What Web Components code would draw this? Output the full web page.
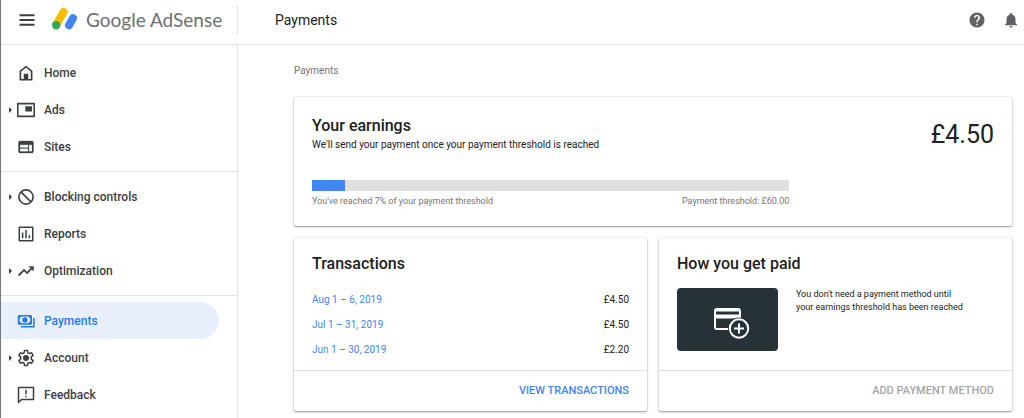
<!DOCTYPE html>
<html lang="en">
<head>
<meta charset="utf-8">
<meta name="viewport" content="width=device-width, initial-scale=1">
<title>Payments - Google AdSense</title>
<style>
  body { margin: 0; background: #fff; color: #212121; font-family: Roboto, "Liberation Sans", sans-serif; font-size: 10px; line-height: 14px; }
</style>
</head>
<body>
<adsense-app></adsense-app>

<script>
const define = (name, html, setup) => {
  const template = document.createElement('template');
  template.innerHTML = html;
  customElements.define(name, class extends HTMLElement {
    constructor() {
      super();
      this.attachShadow({ mode: 'open' }).append(template.content.cloneNode(true));
    }
    connectedCallback() {
      if (setup && !this.ready) { this.ready = true; setup(this, this.shadowRoot); }
    }
  });
};

const ICONS = {
  menu: '<path d="M3 5h18v2.400H3zM3 10.800h18v2.400H3zM3 16.600h18V19H3z"/>',
  home: '<path fill="none" stroke="currentColor" stroke-width="2.2" d="M4.5 9.5 12 3.6l7.500 5.900V21h-15z"/><path d="M9 13h6v8H9z"/>',
  ads: '<path fill="none" stroke="currentColor" stroke-width="2.200" stroke-linejoin="round" d="M1 3.500h22v17H1z"/><path d="M11 7h9v7h-9z"/>',
  sites: '<path d="M20 4H4c-1.100 0-2 .9-2 2v12c0 1.100.9 2 2 2h16c1.100 0 2-.9 2-2V6c0-1.100-.9-2-2-2zm-5 14H4v-4h11v4zm0-5H4V9h11v4zm5 5h-4V9h4v9z" stroke="currentColor" stroke-width=".4"/>',
  block: '<circle cx="12" cy="12" r="9.500" fill="none" stroke="currentColor" stroke-width="2.200"/><path d="m5.500 5.500 13 13" stroke="currentColor" stroke-width="2.200"/>',
  reports: '<path fill="none" stroke="currentColor" stroke-width="2" stroke-linejoin="round" d="M3 3h18v18H3z"/><path d="M6.500 10h2v7.500h-2zM11 6.500h2v11h-2zM15.500 13.500h2v4h-2z"/>',
  trend: '<path d="m16 6 2.300 2.300-4.900 4.900-4-4L1.500 17 3 18.500l6.400-6.400 4 4 6.400-6.300L22 12V6z" stroke="currentColor" stroke-width=".6"/>',
  payments: '<path fill-rule="evenodd" d="M3 4h15a2 2 0 0 1 2 2v9a2 2 0 0 1-2 2H3a2 2 0 0 1-2-2V6a2 2 0 0 1 2-2zm.5 4v5c1 0 2 1 2 2h10c0-1 1-2 2-2V8c-1 0-2-1-2-2h-10c0 1-1 2-2 2zm7-1a3.500 3.500 0 1 1 0 7 3.500 3.500 0 0 1 0-7z"/><path fill="none" stroke="currentColor" stroke-width="2" d="M22.500 8v11.500H5"/>',
  settings: '<path fill="none" stroke="currentColor" stroke-width="2" stroke-linejoin="round" d="m10 2-.5 3-2 1.200-3-1.200-2 3.500L5 10.500v3l-2.500 2 2 3.500 3-1.200 2 1.200.5 3h4l.5-3 2-1.200 3 1.200 2-3.500-2.500-2v-3l2.500-2-2-3.500-3 1.200-2-1.200-.5-3z"/><circle cx="12" cy="12" r="4"/>',
  feedback: '<path fill="none" stroke="currentColor" stroke-width="2" stroke-linejoin="round" d="M2 2h20v16H6l-4 4z"/><path d="M11 5h2v6h-2zM11 13h2v2h-2z"/>',
  help: '<path d="M12 2C6.480 2 2 6.480 2 12s4.480 10 10 10 10-4.480 10-10S17.520 2 12 2zm1 17h-2v-2h2v2zm2.070-7.750-.9.920C13.450 12.900 13 13.500 13 15h-2v-.5c0-1.100.45-2.100 1.170-2.830l1.240-1.260c.37-.36.59-.86.59-1.410 0-1.100-.9-2-2-2s-2 .9-2 2H8c0-2.210 1.790-4 4-4s4 1.790 4 4c0 .88-.36 1.680-.93 2.250z"/>',
  bell: '<path d="M12 22c1.100 0 2-.9 2-2h-4c0 1.100.9 2 2 2zm6-6v-5c0-3.070-1.640-5.640-4.500-6.320V4a1.500 1.500 0 0 0-3 0v.68C7.630 5.360 6 7.920 6 11v5l-2 2v1h16v-1l-2-2z"/>'
};

define('ad-icon', `
  <style>
    :host { display: block; flex: none; width: var(--icon-size, 18px); height: var(--icon-size, 18px); }
    svg { display: block; width: 100%; height: 100%; fill: currentColor; }
  </style>
  <svg viewBox="0 0 24 24" aria-hidden="true"></svg>`,
  (host, root) => { root.querySelector('svg').innerHTML = ICONS[host.getAttribute('name')]; });

define('ad-header', `
  <style>
    :host { display: flex; height: 44px; border-bottom: 1px solid #e3e3e3; }
    button { display: block; padding: 0; border: 0; background: none; color: inherit; }
    .brand { box-sizing: border-box; width: 236px; display: flex; align-items: center; padding: 0 16px 4px; color: #3c4043; }
    .brand a { display: flex; align-items: center; gap: 8px; margin-left: 15px; text-decoration: none; color: #6b6f74; font: 19px/24px Lato, sans-serif; white-space: nowrap; }
    .mark { width: 26px; height: 24px; flex: none; overflow: visible; }
    .rest { flex: 1; display: flex; align-items: center; margin: 5px 0 9px; padding: 0 4px 0 37px; border-left: 1px solid #e3e3e3; }
    h1 { flex: 1; margin: 0; font: 400 14px/20px Roboto, sans-serif; color: #202124; }
    .tools { display: flex; gap: 16px; color: #5f6165; }
  </style>
  <div class="brand">
    <button aria-label="Main menu"><ad-icon name="menu" style="--icon-size:20px"></ad-icon></button>
    <a href="#home">
      <svg class="mark" viewBox="0 0 26 24" aria-hidden="true">
        <path d="M4.500 16.500 11.600 4" stroke="#fbbc04" stroke-width="8" stroke-linecap="round"/>
        <path d="m17 17.300 4-7" stroke="#4285f4" stroke-width="8" stroke-linecap="round"/>
        <circle cx="4.200" cy="17.300" r="4.200" fill="#34a853"/>
      </svg>
      <span>Google AdSense</span>
    </a>
  </div>
  <div class="rest">
    <h1>Payments</h1>
    <div class="tools">
      <button aria-label="Help"><ad-icon name="help"></ad-icon></button>
      <button aria-label="Notifications"><ad-icon name="bell"></ad-icon></button>
    </div>
  </div>`);

define('ad-nav-item', `
  <style>
    :host { display: block; }
    a { display: flex; align-items: center; height: 37px; padding-left: 8px; margin-right: 18px; border-radius: 0 19px 19px 0; color: #3c4043; font: 500 12px/16px Roboto, sans-serif; text-decoration: none; }
    .arrow { width: 3px; margin-right: 5px; border: solid transparent; border-width: 3px 0 3px 3px; box-sizing: border-box; }
    ad-icon { margin-right: 9px; }
    :host([expandable]) .arrow { border-left-color: currentColor; }
    :host([selected]) a { background: #e8f0fe; color: #1f79f0; }
  </style>
  <a><span class="arrow"></span><ad-icon></ad-icon><slot></slot></a>`,
  (host, root) => {
    const icon = document.createElement('ad-icon');
    icon.setAttribute('name', host.getAttribute('icon'));
    root.querySelector('ad-icon').replaceWith(icon);
    const link = root.querySelector('a');
    link.href = '#' + host.getAttribute('icon');
    if (host.hasAttribute('selected')) link.setAttribute('aria-current', 'page');
  });

define('ad-sidebar', `
  <style>
    :host { display: block; box-sizing: border-box; width: 237px; flex: none; padding: 9px 0 5px; border-right: 1px solid #e3e3e3; }
    hr { height: 1px; margin: 6px 0; border: 0; background: #e3e3e3; }
  </style>
  <nav aria-label="Main">
    <ad-nav-item icon="home">Home</ad-nav-item>
    <ad-nav-item icon="ads" expandable>Ads</ad-nav-item>
    <ad-nav-item icon="sites">Sites</ad-nav-item>
    <hr>
    <ad-nav-item icon="block" expandable>Blocking controls</ad-nav-item>
    <ad-nav-item icon="reports">Reports</ad-nav-item>
    <ad-nav-item icon="trend" expandable>Optimization</ad-nav-item>
    <hr>
    <ad-nav-item icon="payments" selected>Payments</ad-nav-item>
    <ad-nav-item icon="settings" expandable>Account</ad-nav-item>
    <ad-nav-item icon="feedback">Feedback</ad-nav-item>
  </nav>`);

define('ad-card', `
  <style>
    :host { display: flex; flex-direction: column; background: #fff; border-radius: 2px; box-shadow: 0 1px 2px rgba(0,0,0,.4), 0 0 2px rgba(0,0,0,.16); }
    .body { flex: 1; padding: 16px 18px 18px; }
    footer { display: none; }
    :host([actions]) .body { padding-bottom: 8px; }
    :host([actions]) footer { display: flex; justify-content: flex-end; align-items: center; height: 40px; padding: 0 18px; border-top: 1px solid #e0e0e0; }
  </style>
  <div class="body"><slot></slot></div>
  <footer><slot name="action"></slot></footer>`);

define('ad-earnings', `
  <style>
    :host { display: block; }
    .top { display: flex; justify-content: space-between; }
    h2 { margin: 3px 0 2px; font: 500 16px/20px Roboto, sans-serif; }
    p { margin: 0; }
    .amount { margin-top: 6px; font-size: 25px; line-height: 32px; }
    .progress { width: 70%; margin-top: 28px; }
    .track { height: 11px; background: #e0e0e0; }
    .fill { width: 7%; height: 100%; background: #4285f4; }
    .labels { display: flex; justify-content: space-between; margin-top: 3px; color: #757575; font-size: 9px; }
  </style>
  <ad-card>
    <div class="top">
      <div><h2>Your earnings</h2><p>We'll send your payment once your payment threshold is reached</p></div>
      <div class="amount">£4.50</div>
    </div>
    <div class="progress">
      <div class="track" role="progressbar" aria-valuenow="7" aria-valuemin="0" aria-valuemax="100" aria-label="Payment threshold"><div class="fill"></div></div>
      <div class="labels"><span>You've reached 7% of your payment threshold</span><span>Payment threshold: £60.00</span></div>
    </div>
  </ad-card>`);

define('ad-transactions', `
  <style>
    :host { display: grid; }
    h2 { margin: 0 0 13px; font: 500 16px/20px Roboto, sans-serif; }
    table { width: 100%; border-collapse: collapse; font-size: 10px; }
    th, td { height: 25px; padding: 0; font-weight: 400; text-align: left; }
    td { text-align: right; }
    a { color: #4285f4; text-decoration: none; }
    button { padding: 0; border: 0; background: none; color: #4285f4; font: 500 11px/16px Roboto, sans-serif; }
  </style>
  <ad-card actions>
    <h2 id="t">Transactions</h2>
    <table aria-labelledby="t">
      <tr><th scope="row"><a href="#aug">Aug 1 – 6, 2019</a></th><td>£4.50</td></tr>
      <tr><th scope="row"><a href="#jul">Jul 1 – 31, 2019</a></th><td>£4.50</td></tr>
      <tr><th scope="row"><a href="#jun">Jun 1 – 30, 2019</a></th><td>£2.20</td></tr>
    </table>
    <button slot="action">VIEW TRANSACTIONS</button>
  </ad-card>`);

define('ad-payment-method', `
  <style>
    :host { display: grid; }
    h2 { margin: 0 0 14px; font: 500 16px/20px Roboto, sans-serif; }
    .method { display: flex; gap: 18px; }
    .tile { flex: none; display: grid; place-items: center; width: 101px; height: 63px; border-radius: 4px; background: #263238; }
    svg { width: 36px; height: 32px; margin-left: 8px; margin-top: 8px; }
    p { margin: 0; font-size: 9px; line-height: 13px; }
    button { padding: 0; border: 0; background: none; color: #a6a6a6; font: 500 11px/16px Roboto, sans-serif; }
  </style>
  <ad-card actions>
    <h2>How you get paid</h2>
    <div class="method">
      <div class="tile">
        <svg viewBox="0 0 36 32" fill="none" stroke="#fff" stroke-width="2" aria-hidden="true">
          <rect x="1" y="1" width="25" height="20" rx="2"/>
          <path d="M1 2.500h25"/><path d="M1 8.500h25" stroke-width="4"/>
          <circle cx="25" cy="20.500" r="11" fill="#263238" stroke="none"/>
          <circle cx="25" cy="20.500" r="9.200"/>
          <path d="M25 15.500v10M20 20.500h10"/>
        </svg>
      </div>
      <p>You don't need a payment method until<br>your earnings threshold has been reached</p>
    </div>
    <button slot="action" disabled>ADD PAYMENT METHOD</button>
  </ad-card>`);

define('adsense-app', `
  <style>
    :host { display: flex; flex-direction: column; box-sizing: border-box; min-height: 100vh; border-left: 1px solid #777; }
    .page { flex: 1; display: flex; }
    main { flex: 1; min-width: 0; padding: 19px 12px 6px 56px; }
    .crumb { margin-bottom: 19px; color: #757575; font-size: 10px; }
    .cards { display: grid; grid-template-columns: 1fr 1fr; gap: 12px; }
    ad-earnings { grid-column: 1 / -1; }
  </style>
  <ad-header></ad-header>
  <div class="page">
    <ad-sidebar></ad-sidebar>
    <main>
      <div class="crumb">Payments</div>
      <div class="cards">
        <ad-earnings></ad-earnings>
        <ad-transactions></ad-transactions>
        <ad-payment-method></ad-payment-method>
      </div>
    </main>
  </div>`);
</script>
</body>
</html>
